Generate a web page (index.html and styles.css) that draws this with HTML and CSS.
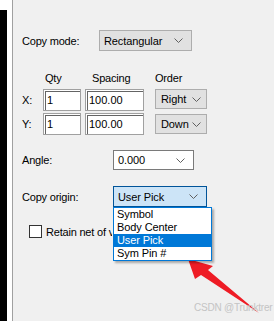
FILE: index.html
```html
<!DOCTYPE html>
<html lang="en">
<head>
  <meta charset="UTF-8">
  <title>Copy options</title>
  <link rel="stylesheet" href="styles.css">
</head>
<body>

  <div class="frame">
    <!-- left window edge -->
    <div class="edge">
      <div class="edge-bar"></div>
    </div>

    <div class="panel">
      <div class="row row-mode">
        <span class="label label-mode">Copy mode:</span>
        <div class="select select-mode">
          <span>Rectangular</span>
          <svg class="chev" width="9" height="5" viewBox="0 0 9 5"><polyline points="0.5,0.5 4.5,4.5 8.5,0.5"/></svg>
        </div>
      </div>

      <div class="row heads">
        <span class="head-qty">Qty</span>
        <span class="head-spacing">Spacing</span>
        <span class="head-order">Order</span>
      </div>

      <div class="row row-x">
        <span class="label label-axis">X:</span>
        <div class="input input-qty">1</div>
        <div class="input input-spacing">100.00</div>
        <div class="select select-order">
          <span>Right</span>
          <svg class="chev" width="9" height="5" viewBox="0 0 9 5"><polyline points="0.5,0.5 4.5,4.5 8.5,0.5"/></svg>
        </div>
      </div>

      <div class="row row-y">
        <span class="label label-axis">Y:</span>
        <div class="input input-qty">1</div>
        <div class="input input-spacing">100.00</div>
        <div class="select select-order select-down">
          <span>Down</span>
          <svg class="chev" width="9" height="5" viewBox="0 0 9 5"><polyline points="0.5,0.5 4.5,4.5 8.5,0.5"/></svg>
        </div>
      </div>

      <div class="row row-angle">
        <span class="label label-wide">Angle:</span>
        <div class="select select-angle">
          <span>0.000</span>
          <svg class="chev" width="9" height="5" viewBox="0 0 9 5"><polyline points="0.5,0.5 4.5,4.5 8.5,0.5"/></svg>
        </div>
      </div>

      <div class="row row-origin">
        <span class="label label-wide">Copy origin:</span>
        <div class="select select-origin">
          <span>User Pick</span>
          <svg class="chev" width="9" height="5" viewBox="0 0 9 5"><polyline points="0.5,0.5 4.5,4.5 8.5,0.5"/></svg>
        </div>

        <!-- open dropdown list -->
        <ul class="menu">
          <li>Symbol</li>
          <li>Body Center</li>
          <li class="active">User Pick</li>
          <li>Sym Pin #</li>
        </ul>
      </div>

      <div class="row row-check">
        <span class="checkbox"></span>
        <span class="check-text">Retain net of vias</span>
      </div>
    </div>
  </div>

  <!-- annotation arrow and watermark -->
  <svg class="arrow" width="274" height="321" viewBox="0 0 274 321">
    <polygon points="188,259 213,266 208,270 259,313 201,275 195,279"/>
  </svg>
  <span class="watermark">CSDN @Trunktrer</span>

</body>
</html>
```

FILE: styles.css
```css
body {
  margin: 0;
  font-family: "Liberation Sans", Arial, sans-serif;
  font-size: 11px;
  color: #000;
  background: #f0f0f0;
}
.frame {
  display: flex;
  height: 321px;
  overflow: hidden;
}
.edge {
  width: 12px;
  background: #fff;
  border-right: 1px solid #a0a0a0;
}
.edge-bar {
  width: 7px;
  height: 100%;
  margin-top: 10px;
  background: #000;
}
.panel {
  flex: 1;
  display: flex;
  flex-direction: column;
  padding-left: 9px;
  background: #f0f0f0;
}
.row {
  display: flex;
  align-items: center;
}
.label {
  flex: none;
  letter-spacing: -0.2px;
}
.label-mode {
  width: 77px;
}
.label-axis {
  width: 21px;
}
.label-wide {
  width: 91px;
}
.row-mode {
  margin-top: 30px;
  height: 21px;
}
.heads {
  margin-top: 21px;
  height: 12px;
  letter-spacing: -0.2px;
}
.head-qty {
  margin-left: 23px;
  width: 47px;
}
.head-spacing {
  width: 63px;
}
.row-x {
  margin-top: 5px;
  height: 22px;
  align-items: flex-start;
}
.row-y {
  margin-top: 2px;
  height: 22px;
  align-items: flex-start;
}
.row-x .label,
.row-y .label {
  line-height: 22px;
}
.input {
  box-sizing: border-box;
  height: 22px;
  line-height: 18px;
  padding-left: 3px;
  background: #fff;
  border: 1px solid #a0a0a0;
  box-shadow: inset 1px 1px 0 #fff, inset 2px 2px 0 #646464;
  padding-top: 1px;
}
.input-qty {
  width: 38px;
  margin-right: 4px;
}
.input-spacing {
  width: 59px;
  margin-right: 11px;
}
.select {
  box-sizing: border-box;
  display: flex;
  align-items: center;
  justify-content: space-between;
  padding: 0 8px 0 4px;
  background: #e1e1e1;
  border: 1px solid #adadad;
  letter-spacing: -0.1px;
}
.chev {
  fill: none;
  stroke: #606060;
  stroke-width: 1;
}
.select-mode {
  width: 93px;
  height: 21px;
}
.select-order {
  width: 52px;
  height: 20px;
  padding-left: 5px;
  padding-right: 5px;
}
.select-down {
  margin-top: 1px;
}
.row-angle {
  margin-top: 15px;
  height: 20px;
}
.select-angle {
  width: 81px;
  height: 20px;
  background: #fff;
  border-color: #7a7a7a;
}
.row-origin {
  position: relative;
  margin-top: 16px;
  height: 21px;
}
.select-origin {
  width: 94px;
  height: 21px;
  background: #cce4f7;
  border-color: #005499;
}
.menu {
  position: absolute;
  left: 91px;
  top: 21px;
  z-index: 2;
  width: 97px;
  margin: 0;
  padding: 0;
  list-style: none;
  background: #fff;
  border: 1px solid #0078d7;
  box-shadow: 2px 2px 2px rgba(0, 0, 0, 0.3);
}
.menu li {
  height: 13px;
  line-height: 13px;
  padding-left: 3px;
  letter-spacing: -0.1px;
}
.menu li.active {
  background: #0078d7;
  color: #fff;
}
.row-check {
  margin-top: 18px;
  height: 13px;
}
.checkbox {
  box-sizing: border-box;
  flex: none;
  width: 13px;
  height: 13px;
  margin-left: 7px;
  margin-right: 4px;
  background: #fff;
  border: 1px solid #333;
}
/* the open list covers the rest of this label */
.check-text {
  width: 66px;
  overflow: hidden;
  white-space: nowrap;
  letter-spacing: -0.2px;
}
.arrow {
  position: absolute;
  left: 0;
  top: 0;
  fill: #ee1c25;
  pointer-events: none;
}
.watermark {
  position: absolute;
  left: 194px;
  top: 302px;
  white-space: nowrap;
  font-size: 10px;
  letter-spacing: -0.2px;
  color: #c4c4c4;
}
```
